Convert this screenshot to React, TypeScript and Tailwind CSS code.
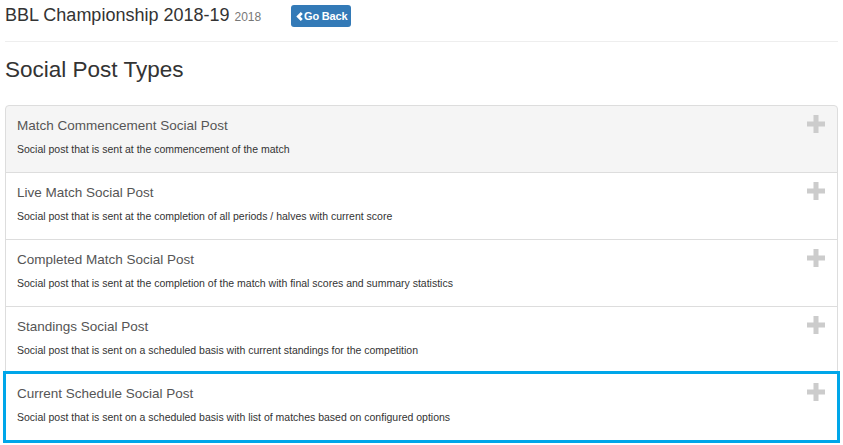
import React from "react";

const posts = [
  {
    title: "Match Commencement Social Post",
    desc: "Social post that is sent at the commencement of the match",
  },
  {
    title: "Live Match Social Post",
    desc: "Social post that is sent at the completion of all periods / halves with current score",
  },
  {
    title: "Completed Match Social Post",
    desc: "Social post that is sent at the completion of the match with final scores and summary statistics",
  },
  {
    title: "Standings Social Post",
    desc: "Social post that is sent on a scheduled basis with current standings for the competition",
  },
  {
    title: "Current Schedule Social Post",
    desc: "Social post that is sent on a scheduled basis with list of matches based on configured options",
  },
];

function PlusIcon() {
  return (
    <svg width="18" height="18" viewBox="0 0 18 18" className="shrink-0 -mt-[2px]">
      <rect x="6.5" y="0" width="5" height="18" fill="#cccccc" />
      <rect x="0" y="6.5" width="18" height="5" fill="#cccccc" />
    </svg>
  );
}

export default function App() {
  return (
    <div className="min-h-screen bg-white px-[5px] font-['Liberation_Sans',Arial,sans-serif] text-[#333]">
      {/* Header */}
      <div className="flex items-center pt-[5px] h-[27px]">
        <h1 className="text-[18px] leading-[22px] text-[#333]">
          BBL Championship 2018-19{" "}
          <small className="text-[12px] text-[#777]">2018</small>
        </h1>
        <button
          type="button"
          className="ml-[30px] h-[22px] w-[60px] rounded-[3px] bg-[#337ab7] text-white text-[11px] font-bold flex items-center justify-center gap-[1px] tracking-[-0.2px]"
        >
          <svg width="8" height="9" viewBox="0 0 8 9">
            <path d="M5.8 0 L7.8 2 L5.3 4.5 L7.8 7 L5.8 9 L1.3 4.5 Z" fill="white" />
          </svg>
          Go Back
        </button>
      </div>

      <div className="mt-[14px] border-t border-[#eee]" />

      <h2 className="mt-[14px] text-[22.5px] leading-[28px] text-[#333]">Social Post Types</h2>

      {/* List */}
      <div className="mt-[21px] flex flex-col">
        {posts.map((p, i) => {
          const first = i === 0;
          const last = i === posts.length - 1;
          return (
            <div
              key={p.title}
              className={`flex items-start justify-between border border-[#ddd] pl-[11px] pr-[12px] pt-[11px] pb-[15px] ${
                first ? "rounded-t-[4px] bg-[#f5f5f5]" : "-mt-px bg-white"
              } ${last ? "outline-[3px] outline-solid outline-[#00a6e9] -outline-offset-1 relative" : ""}`}
            >
              <div>
                <h4 className="text-[13.5px] leading-[18px] text-[#555]">{p.title}</h4>
                <p className="mt-[6px] text-[10.5px] leading-[16px] text-[#333]">{p.desc}</p>
              </div>
              <PlusIcon />
            </div>
          );
        })}
      </div>
    </div>
  );
}
